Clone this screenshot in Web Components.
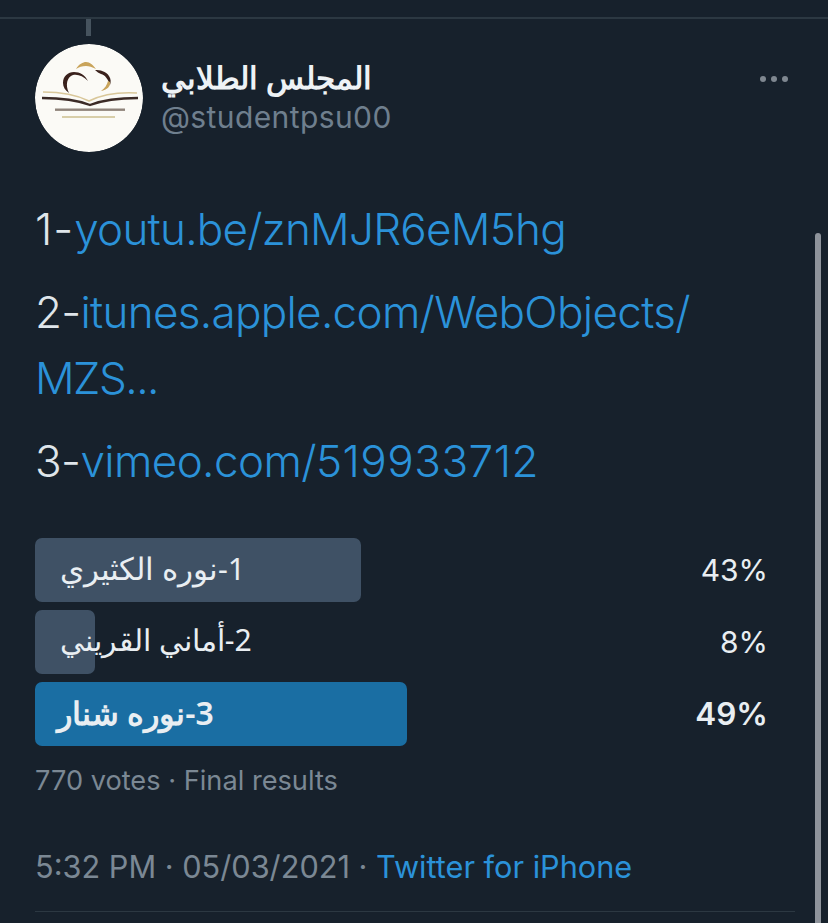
<!DOCTYPE html>
<html lang="en"><head><meta charset="utf-8">
<style>
html,body{margin:0;padding:0;background:#17212c;}
body{width:828px;height:923px;overflow:hidden;position:relative;font-family:Inter,"Noto Sans",sans-serif;}
</style></head><body>
<tweet-detail>
  <tweet-head slot="head" name="المجلس الطلابي" handle="@studentpsu00"></tweet-head>
  <tweet-links slot="links"></tweet-links>
  <tweet-poll slot="poll"></tweet-poll>
  <tweet-meta slot="meta"></tweet-meta>
</tweet-detail>
<script>
function def(name, html, init){
  customElements.define(name, class extends HTMLElement{
    constructor(){super();const s=this.attachShadow({mode:'open'});s.innerHTML=html;}
    connectedCallback(){ if(init) init(this,this.shadowRoot); }
  });
}
def('tweet-detail',`<style>
:host{display:block;width:828px;height:923px;position:relative;overflow:hidden;color:#e8edf1}
.rule{height:2px;margin-top:17px;background:#2c3842}
.thread{width:5px;height:17px;margin-left:86px;background:#46535e}
.body{padding:8px 35px 0 35px;display:flex;flex-direction:column}
.bar{position:absolute;left:815px;top:233px;width:6px;height:700px;border-radius:3px 3px 0 0;background:#8e939b}
</style>
<div class="rule"></div><div class="thread"></div>
<div class="body"><slot name="head"></slot><slot name="links"></slot><slot name="poll"></slot><slot name="meta"></slot></div>
<div class="bar"></div>`);
def('tweet-head',`<style>
:host{display:flex;align-items:flex-start}
.av{flex:none;width:108px;height:108px;border-radius:50%;overflow:hidden;display:block}
.t{flex:1;margin-left:18px;padding-top:13px}
.n{font:600 31px/40px "Noto Sans","Noto Sans CJK SC",sans-serif;color:#eef2f5;direction:rtl;text-align:left;width:212px;white-space:nowrap;unicode-bidi:plaintext}
.h{font:400 30px/36px Inter,sans-serif;color:#6f7f8e;margin-top:2px;letter-spacing:.4px}
.m{display:flex;gap:5px;margin:32px 5px 0 0}
.m i{width:6px;height:6px;border-radius:50%;background:#7f8790;display:block}
</style>
<svg class="av" viewBox="0 0 108 108">
 <circle cx="54" cy="54" r="54" fill="#fbfaf6"/>
 <path d="M28 39C28 32 33 28 39 28C45 28 50 31 53 37C48 32 43 30 38 31C32 33 30 41 34 49C30 46 28 43 28 39Z" fill="#3a211c"/>
 <path d="M41 25C44 20 48 18 51 18C55 18 58 21 61 25C57 23 54 22 51 22C47 22 44 23 41 25Z" fill="#c9a45b"/>
 <path d="M60 26C65 26 71 27 74 32C76 35 76 38 75 41C73 35 70 31 66 30C64 29 62 28 60 26Z" fill="#3a211c"/>
 <path d="M75 38C76 42 72 46 66 47C70 44 72 41 73 37Z" fill="#c9a45b"/>
 <path d="M8 48C24 48 42 51 54 57C66 51 84 48 102 49" fill="none" stroke="#d9c79a" stroke-width="1.6"/>
 <path d="M7 54C24 54 42 56 55 61C68 56 86 54 103 54" fill="none" stroke="#3b2a26" stroke-width="2.4"/>
 <rect x="20" y="64.500" width="70" height="2.4" fill="#8f837b"/>
 <rect x="27" y="72" width="53" height="2" fill="#d8cea9"/>
</svg>
<div class="t"><div class="n" id="n"></div><div class="h" id="h"></div></div>
<div class="m"><i></i><i></i><i></i></div>`,(el,s)=>{s.getElementById('n').textContent=el.getAttribute('name');s.getElementById('h').textContent=el.getAttribute('handle');});
def('tweet-links',`<style>
:host{display:block;margin-top:44px;font:300 44px/66px Inter,sans-serif;color:#dfe5ea;letter-spacing:-.6px}
p{margin:0 0 17px}
a{color:#2b92d9;text-decoration:none}
.pre{letter-spacing:1px}
.one a{letter-spacing:-.75px}
.two{letter-spacing:-.7px}
.ms{letter-spacing:-1.5px}
.dg{letter-spacing:.5px}
</style>
<p class="one"><span class="pre">1-</span><a>youtu.be/znMJR6eM5hg</a></p>
<p class="two">2-<a>itunes.apple.com/WebObjects/<br><span class="ms">MZS...</span></a></p>
<p>3-<a>vimeo.com/<span class="dg">519933712</span></a></p>`);
def('poll-row',`<style>
:host{display:flex;align-items:center;height:64px;position:relative}
.track{position:relative;width:372px;height:64px}
.fill{position:absolute;left:0;top:0;bottom:0;border-radius:7px;background:var(--c,#3f5165)}
.l{position:relative;display:flex;box-sizing:border-box;height:100%;padding-bottom:3px;align-items:center;padding-left:var(--p,25px);font:400 var(--fs,30.5px)/1 "Noto Sans","Noto Sans CJK SC",sans-serif;color:#e9eef2;white-space:nowrap;font-weight:var(--w,400)}
.pc{margin-left:auto;padding-right:25px;font:400 var(--pf,30px)/1 Inter,sans-serif;color:#e9eef2;font-weight:var(--w,400)}
</style><div class="track"><div class="fill" id="f"></div><div class="l"><bdi id="t"></bdi></div></div><div class="pc" id="pc"></div>`,
(el,s)=>{s.getElementById('f').style.width=el.getAttribute('w')+'px';s.getElementById('t').textContent=el.getAttribute('text');s.getElementById('pc').textContent=el.getAttribute('pct');});
def('tweet-poll',`<style>
:host{display:flex;flex-direction:column;gap:8px;margin-top:27px}
.foot{font:400 27.200px/32px Inter,sans-serif;color:#7b8894;margin-top:11px}
.s{--fs:30.200px}
.b{--c:#1a6ea3;--w:600;--p:22px;--fs:32px;--pf:31.500px}
</style>
<poll-row w="326" text="1-نوره الكثيري" pct="43%"></poll-row>
<poll-row class="s" w="60" text="2-أماني القريني" pct="8%"></poll-row>
<poll-row class="b" w="372" text="3-نوره شنار" pct="49%"></poll-row>
<div class="foot">770 votes · Final results</div>`);
def('tweet-meta',`<style>
:host{display:block;margin-top:52px;font:400 30.700px/36px Inter,sans-serif;color:#7b8894}
a{color:#2b92d9}
.r{height:1px;background:#2c3842;margin-top:26px;margin-right:-2px}
</style><div>5:32 PM · 05/03/2021 · <a>Twitter for iPhone</a></div><div class="r"></div>`);
</script>
</body></html>
